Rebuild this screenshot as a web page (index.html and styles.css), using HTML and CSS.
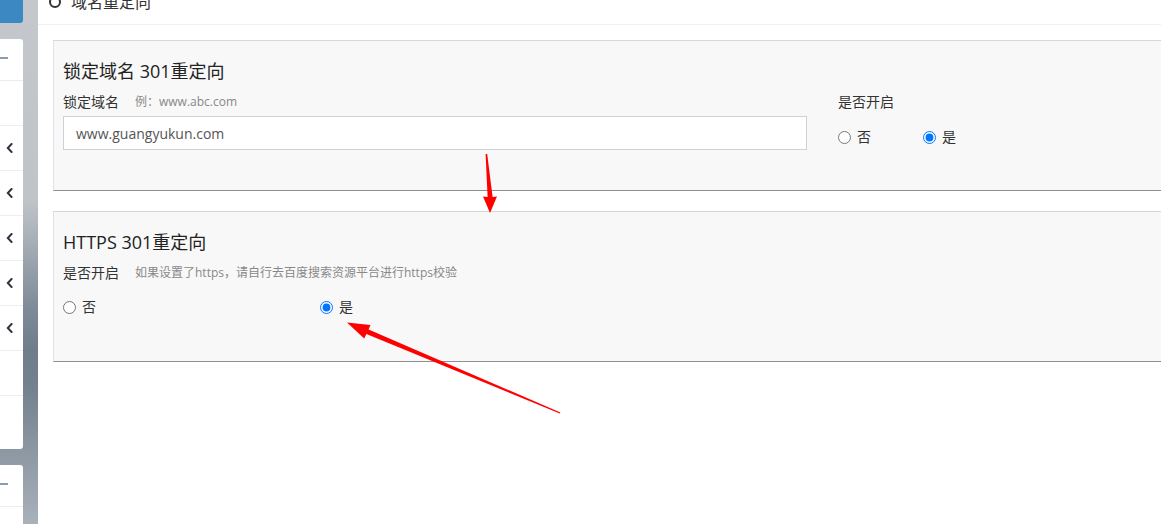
FILE: index.html
```html
<!DOCTYPE html>
<html lang="zh-CN">
<head>
<meta charset="utf-8">
<title>域名重定向</title>
<link rel="stylesheet" href="styles.css">
</head>
<body>
<div class="app">
  <aside class="side">
    <div class="side-top"></div>
    <div class="panel panel-main">
      <div class="panel-head"><span class="dash"></span></div>
      <div class="row"></div>
      <div class="row"><svg class="chev" viewBox="0 0 7 10" width="7" height="10"><polyline points="5.5,1 1.8,5 5.5,9"/></svg></div>
      <div class="row"><svg class="chev" viewBox="0 0 7 10" width="7" height="10"><polyline points="5.5,1 1.8,5 5.5,9"/></svg></div>
      <div class="row"><svg class="chev" viewBox="0 0 7 10" width="7" height="10"><polyline points="5.5,1 1.8,5 5.5,9"/></svg></div>
      <div class="row"><svg class="chev" viewBox="0 0 7 10" width="7" height="10"><polyline points="5.5,1 1.8,5 5.5,9"/></svg></div>
      <div class="row"><svg class="chev" viewBox="0 0 7 10" width="7" height="10"><polyline points="5.5,1 1.8,5 5.5,9"/></svg></div>
      <div class="row"></div>
      <div class="row row-last"></div>
    </div>
    <div class="panel panel-second">
      <div class="panel-head"><span class="dash"></span></div>
      <div class="row"></div>
    </div>
  </aside>

  <main class="main">
    <div class="page-head">
      <div class="page-head-inner">
        <span class="ring"></span>
        <span class="page-title">域名重定向</span>
      </div>
    </div>

    <div class="content">
      <section class="card">
        <h2 class="card-title">锁定域名 301重定向</h2>
        <div class="card-body">
          <div class="col-left">
            <div class="field-label"><span class="label">锁定域名</span><span class="hint">例：www.abc.com</span></div>
            <input class="text-input" type="text" value="www.guangyukun.com">
          </div>
          <div class="col-right">
            <div class="field-label"><span class="label">是否开启</span></div>
            <div class="radios radios-narrow">
              <label class="radio"><input type="radio" name="lock"><span>否</span></label>
              <label class="radio"><input type="radio" name="lock" checked><span>是</span></label>
            </div>
          </div>
        </div>
      </section>

      <section class="card">
        <h2 class="card-title">HTTPS 301重定向</h2>
        <div class="field-label"><span class="label">是否开启</span><span class="hint">如果设置了https，请自行去百度搜索资源平台进行https校验</span></div>
        <div class="radios radios-wide">
          <label class="radio"><input type="radio" name="https"><span>否</span></label>
          <label class="radio"><input type="radio" name="https" checked><span>是</span></label>
        </div>
      </section>
    </div>
  </main>

  <svg class="arrows" width="1161" height="524" viewBox="0 0 1161 524">
    <polygon points="485.6,154 487.2,154 492.6,197 497,196.5 490,213 483,196.5 487.6,197"/>
    <polygon points="347,322.5 370.5,325 368.6,329.4 560.4,412.6 559.8,413.6 366.4,334 364.2,338.6"/>
  </svg>
</div>
</body>
</html>
```

FILE: styles.css
```css
html, body {
  margin: 0;
  padding: 0;
  overflow: hidden;
  background: #ffffff;
}

body {
  font-family: "Open Sans", "Noto Sans CJK SC", sans-serif;
  color: #333333;
}

.app {
  position: relative;
  display: flex;
  width: 1161px;
  height: 524px;
  overflow: hidden;
}

/* ---------- sidebar ---------- */
.side {
  flex: 0 0 38px;
  width: 38px;
  height: 524px;
  display: flex;
  flex-direction: column;
  overflow: hidden;
  background: linear-gradient(to bottom, #c4c8cd 0px, #bfc4c9 200px, #7d8a97 310px, #6f7d8b 350px, #74828f 390px, #a9b1b9 524px);
}

.side-top {
  flex: 0 0 23px;
  width: 23px;
  height: 23px;
  background: #3b88c3;
  border-bottom-right-radius: 3px;
}

.panel {
  width: 23px;
  background: #ffffff;
  border-radius: 0 3px 3px 0;
  display: flex;
  flex-direction: column;
}

.panel-main {
  flex: 0 0 410px;
  margin-top: 16px;
  height: 410px;
}

.panel-second {
  flex: 0 0 auto;
  margin-top: 16px;
  border-bottom-right-radius: 0;
}

.panel-head {
  flex: 0 0 auto;
  height: 41px;
  border-bottom: 1px solid #ececec;
  display: flex;
  align-items: flex-start;
}

.dash {
  display: block;
  width: 8px;
  height: 2px;
  margin-top: 18px;
  background: #8d9bb1;
}

.row {
  flex: 0 0 auto;
  height: 44px;
  border-bottom: 1px solid #eeeeee;
  display: flex;
  align-items: center;
  padding-left: 6px;
}

.row-last {
  flex: 1 1 auto;
  border-bottom: none;
}

.chev {
  display: block;
}

.chev polyline {
  fill: none;
  stroke: #2f3540;
  stroke-width: 2;
  stroke-linecap: square;
  stroke-linejoin: miter;
}

/* ---------- main ---------- */
.main {
  flex: 1;
  min-width: 0;
  background: #ffffff;
  overflow: hidden;
}

.page-head {
  display: flex;
  align-items: flex-start;
  height: 24px;
  border-bottom: 1px solid #eef0f2;
}

.page-head-inner {
  display: flex;
  align-items: center;
  height: 22px;
  margin-top: -9px;
  padding-left: 11px;
}

.ring {
  width: 8px;
  height: 8px;
  border: 2px solid #333333;
  border-radius: 50%;
}

.page-title {
  margin-left: 10px;
  font-size: 16px;
  line-height: 22px;
  color: #333333;
}

.content {
  padding: 15px 0 0 15px;
}

.card {
  width: 1130px;
  height: 151px;
  box-sizing: border-box;
  background: #f8f8f8;
  border-top: 1px solid #d6d6de;
  border-left: 1px solid #e2e2e7;
  border-bottom: 1px solid #8f8f8f;
  padding: 17px 0 0 9px;
}

.card + .card {
  margin-top: 20px;
}

.card-title {
  margin: 0;
  font-size: 18px;
  line-height: 26px;
  font-weight: normal;
  color: #222222;
}

.card-body {
  display: flex;
  gap: 31px;
}

.col-left {
  width: 744px;
}

.field-label {
  margin-top: 8px;
  height: 20px;
  line-height: 20px;
  display: flex;
  align-items: center;
}

.label {
  font-size: 14px;
  color: #333333;
}

.hint {
  margin-left: 16px;
  font-size: 12px;
  color: #888888;
}

.text-input {
  display: block;
  margin-top: 4px;
  width: 744px;
  height: 34px;
  box-sizing: border-box;
  border: 1px solid #cdd1da;
  background: #ffffff;
  padding: 0 12px;
  font-family: "Open Sans", "Noto Sans CJK SC", sans-serif;
  font-size: 14px;
  color: #555555;
  outline: none;
}

.radios {
  display: flex;
  height: 20px;
  align-items: center;
}

.radios-narrow {
  margin-top: 15px;
}

.radios-wide {
  margin-top: 14px;
}

.radio {
  display: flex;
  align-items: center;
  font-size: 14px;
  color: #333333;
}

.radios-narrow .radio {
  width: 85px;
}

.radios-wide .radio {
  width: 257px;
}

.radio input {
  margin: 0;
  width: 13px;
  height: 13px;
}

.radio span {
  margin-left: 6px;
  line-height: 20px;
}

/* ---------- annotation arrows ---------- */
.arrows {
  position: absolute;
  left: 0;
  top: 0;
  pointer-events: none;
}

.arrows polygon {
  fill: #ff0000;
}
```
